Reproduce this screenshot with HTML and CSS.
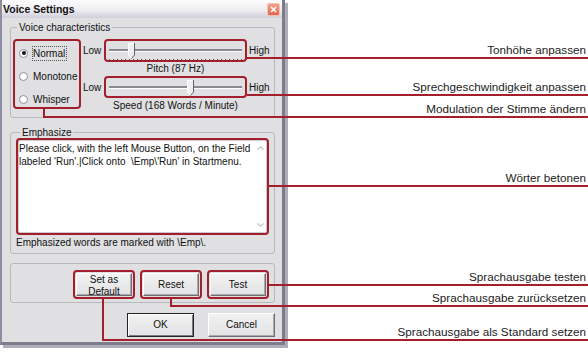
FILE: index.html
```html
<!DOCTYPE html>
<html lang="de">
<head>
    <meta charset="UTF-8">
    <meta name="viewport" content="width=device-width, initial-scale=1.0">
    <title>Voice Settings</title>
    <link rel="stylesheet" href="styles.css">
</head>
<body>
    <div class="screen">
        <div class="dialog">
            <div class="titlebar">
                <span class="title">Voice Settings</span>
                <span class="close">
                    <svg width="7" height="7" viewBox="0 0 7 7"><path d="M1 1L6 6M6 1L1 6" stroke="#fff" stroke-width="1.6"/></svg>
                </span>
            </div>

            <div class="client">
                <fieldset class="group voice">
                    <legend>Voice characteristics</legend>
                    <div class="radios mark">
                        <div class="radio checked"><span class="dot"></span><span class="focus">Normal</span></div>
                        <div class="radio"><span class="dot"></span><span>Monotone</span></div>
                        <div class="radio"><span class="dot"></span><span>Whisper</span></div>
                    </div>
                    <div class="sliders">
                        <div class="slider-row">
                            <span class="end">Low</span>
                            <div class="slider mark">
                                <div class="track"></div>
                                <div class="ticks"></div>
                                <svg class="thumb" style="left: 22px" width="7" height="16" viewBox="0 0 7 16"><path d="M0.5 0.5H6.5V12L3.5 15.5L0.5 12Z" fill="#efefef" stroke="#fff"/><path d="M6.5 0V12L3.5 15.5" fill="none" stroke="#5e5e5e"/></svg>
                            </div>
                            <span class="end high">High</span>
                        </div>
                        <div class="caption">Pitch (87 Hz)</div>

                        <div class="slider-row second">
                            <span class="end">Low</span>
                            <div class="slider mark">
                                <div class="track"></div>
                                <svg class="thumb" style="left: 81px" width="7" height="16" viewBox="0 0 7 16"><path d="M0.5 0.5H6.5V12L3.5 15.5L0.5 12Z" fill="#efefef" stroke="#fff"/><path d="M6.5 0V12L3.5 15.5" fill="none" stroke="#5e5e5e"/></svg>
                            </div>
                            <span class="end high">High</span>
                        </div>
                        <div class="caption last">Speed (168 Words / Minute)</div>
                    </div>
                </fieldset>

                <fieldset class="group emphasize">
                    <legend>Emphasize</legend>
                    <div class="textbox mark">
                        <div class="text">Please click, with the left Mouse Button, on the Field<br>labeled 'Run'.|Click onto&nbsp; \Emp\'Run' in Startmenu.</div>
                        <div class="scroll">
                            <svg width="7" height="4" viewBox="0 0 7 4"><path d="M0.5 3.5L3.5 0.8L6.5 3.5" fill="none" stroke="#c4c4cc" stroke-width="1.2"/></svg>
                            <svg width="7" height="4" viewBox="0 0 7 4"><path d="M0.5 0.5L3.5 3.2L6.5 0.5" fill="none" stroke="#c4c4cc" stroke-width="1.2"/></svg>
                        </div>
                    </div>
                    <div class="note">Emphasized words are marked with \Emp\.</div>
                </fieldset>

                <fieldset class="group tools">
                    <div class="mark"><button class="btn">Set as<br>Default</button></div>
                    <div class="mark"><button class="btn">Reset</button></div>
                    <div class="mark"><button class="btn">Test</button></div>
                </fieldset>

                <div class="actions">
                    <button class="btn wide default">OK</button>
                    <button class="btn wide">Cancel</button>
                </div>
            </div>
        </div>

        <!-- callouts -->
        <div class="callout c-pitch"><span>Tonhöhe anpassen</span></div>
        <div class="callout c-speed"><span>Sprechgeschwindigkeit anpassen</span></div>
        <div class="callout c-mode"><span>Modulation der Stimme ändern</span></div>
        <div class="callout c-words"><span>Wörter betonen</span></div>
        <div class="callout c-test"><span>Sprachausgabe testen</span></div>
        <div class="callout c-reset"><span>Sprachausgabe zurücksetzen</span></div>
        <div class="callout c-default"><span>Sprachausgabe als Standard setzen</span></div>
    </div>
</body>
</html>
```

FILE: styles.css
```css
body {
    margin: 0;
    background: #fff;
    font-family: "Liberation Sans", Arial, sans-serif;
}
.screen {
    position: relative;
    width: 588px;
    height: 352px;
    overflow: hidden;
}

/* dialog window */
.dialog {
    width: 285px;
    height: 345px;
    box-sizing: border-box;
    border-left: 2px solid #8e8ea0;
    border-right: 3px solid #7c7c8c;
    border-bottom: 3px solid #7c7c8c;
    background: #e0e0e2;
    box-shadow: 3px 3px 0 #aeaeb8;
    display: flex;
    flex-direction: column;
    font-size: 10px;
    color: #111;
}
.titlebar {
    height: 18px;
    flex: none;
    display: flex;
    align-items: center;
    justify-content: space-between;
    padding: 0 2px 0 1px;
    background: linear-gradient(#fdfdfd, #ededf1 55%, #cfcfda);
}
.title {
    font-weight: bold;
    font-size: 10.5px;
}
.close {
    width: 11px;
    height: 11px;
    display: flex;
    align-items: center;
    justify-content: center;
    border: 1px solid #f6c0b4;
    border-radius: 2px;
    background: linear-gradient(#f4a28e, #e2664e);
}
.client {
    flex: 1;
    display: flex;
    flex-direction: column;
    padding: 4px 7px 0 8px;
}

/* group boxes */
.group {
    margin: 0;
    padding: 0;
    min-width: 0;
    border: 1px solid #b9b9bd;
    border-radius: 3px;
}
.group legend {
    margin-left: 4px;
    padding: 0 2px;
    font-size: 10px;
    line-height: 11px;
}
.mark {
    box-sizing: border-box;
    border: 2px solid #a31f2b;
    border-radius: 4px;
}

/* voice characteristics */
.voice {
    display: flex;
    align-items: flex-start;
    padding: 6px 3px 4px 2px;
}
.radios {
    width: 68px;
    height: 70px;
    display: flex;
    flex-direction: column;
    gap: 9px;
    padding: 5px 0 0 4px;
}
.radio {
    height: 14px;
    display: flex;
    align-items: center;
    gap: 5px;
}
.dot {
    width: 9px;
    height: 9px;
    box-sizing: border-box;
    border: 1px solid #8d8d95;
    border-radius: 50%;
    background: #fff;
    display: flex;
    align-items: center;
    justify-content: center;
}
.checked .dot::after {
    content: "";
    width: 4px;
    height: 4px;
    border-radius: 50%;
    background: #111;
}
.focus {
    margin-left: -1px;
    padding: 1px 1px 1px 0;
    border: 1px dotted #555;
}
.sliders {
    margin-left: 2px;
    display: flex;
    flex-direction: column;
}
.slider-row {
    display: flex;
    align-items: center;
}
.end {
    width: 21px;
}
.end.high {
    width: auto;
    margin-left: 2px;
}
.caption {
    width: 143px;
    margin-left: 21px;
    height: 14px;
    line-height: 14px;
    text-align: center;
}
.caption.last {
    height: 15px;
    line-height: 16px;
}
.slider {
    position: relative;
    width: 143px;
    height: 23px;
    display: flex;
    flex-direction: column;
    padding: 8px 3px 0;
}
.second .slider {
    height: 22px;
}
.track {
    height: 2px;
    background: #8a8a90;
    box-shadow: 0 1px 0 #fff;
}
.ticks {
    margin-top: auto;
    height: 1px;
    background: repeating-linear-gradient(90deg, #555 0 1px, transparent 1px 4px);
}
.thumb {
    position: absolute;
    top: 2px;
}

/* emphasize */
.emphasize {
    margin-top: 9px;
    padding: 0 5px 4px;
}
.textbox {
    height: 97px;
    display: flex;
    background: #fff;
    box-shadow: inset 0 0 0 1px #c9c9d0;
}
.text {
    flex: 1;
    padding: 2px 0 0 1px;
    line-height: 13px;
}
.scroll {
    width: 14px;
    display: flex;
    flex-direction: column;
    align-items: center;
    justify-content: space-between;
    padding: 6px 0 6px;
}
.note {
    margin-top: 2px;
    line-height: 12px;
}

/* buttons */
.tools {
    margin-top: 9px;
    padding: 6px 5px 3px;
    display: flex;
    justify-content: flex-end;
    gap: 5px;
}
.tools .mark {
    width: 62px;
    height: 29px;
    padding: 1px;
}
.btn {
    width: 100%;
    height: 100%;
    padding: 0;
    font-family: inherit;
    font-size: 10px;
    line-height: 12px;
    color: #111;
    background: linear-gradient(#f2f2f2, #e2e2e4);
    border: 1px solid;
    border-color: #fff #6e6e74 #6e6e74 #fff;
    box-shadow: inset -1px -1px 0 #a9a9ae;
}
.actions {
    margin-top: 10px;
    display: flex;
    justify-content: flex-end;
    gap: 14px;
}
.btn.wide {
    width: 67px;
    height: 24px;
}
.btn.default {
    border-color: #222;
    box-shadow: inset 1px 1px 0 #fff, inset -1px -1px 0 #7a7a80;
}

/* callout lines over the screenshot */
.callout {
    position: absolute;
    right: 0;
    height: 0;
    border-bottom: 2px solid #a31f2b;
    font-size: 11.7px;
    color: #1c1c1c;
}
.callout span {
    position: absolute;
    right: 2px;
    bottom: 1px;
    line-height: 12px;
    white-space: nowrap;
}
.c-pitch { left: 247px; top: 57px; }
.c-speed { left: 247px; top: 94px; }
.c-mode { left: 43px; top: 109px; height: 7px; border-left: 2px solid #a31f2b; }
.c-words { left: 268px; top: 185px; }
.c-test { left: 269px; top: 284px; }
.c-reset { left: 170px; top: 299px; height: 6px; border-left: 2px solid #a31f2b; }
.c-default { left: 102px; top: 299px; height: 40px; border-left: 2px solid #a31f2b; }
```
